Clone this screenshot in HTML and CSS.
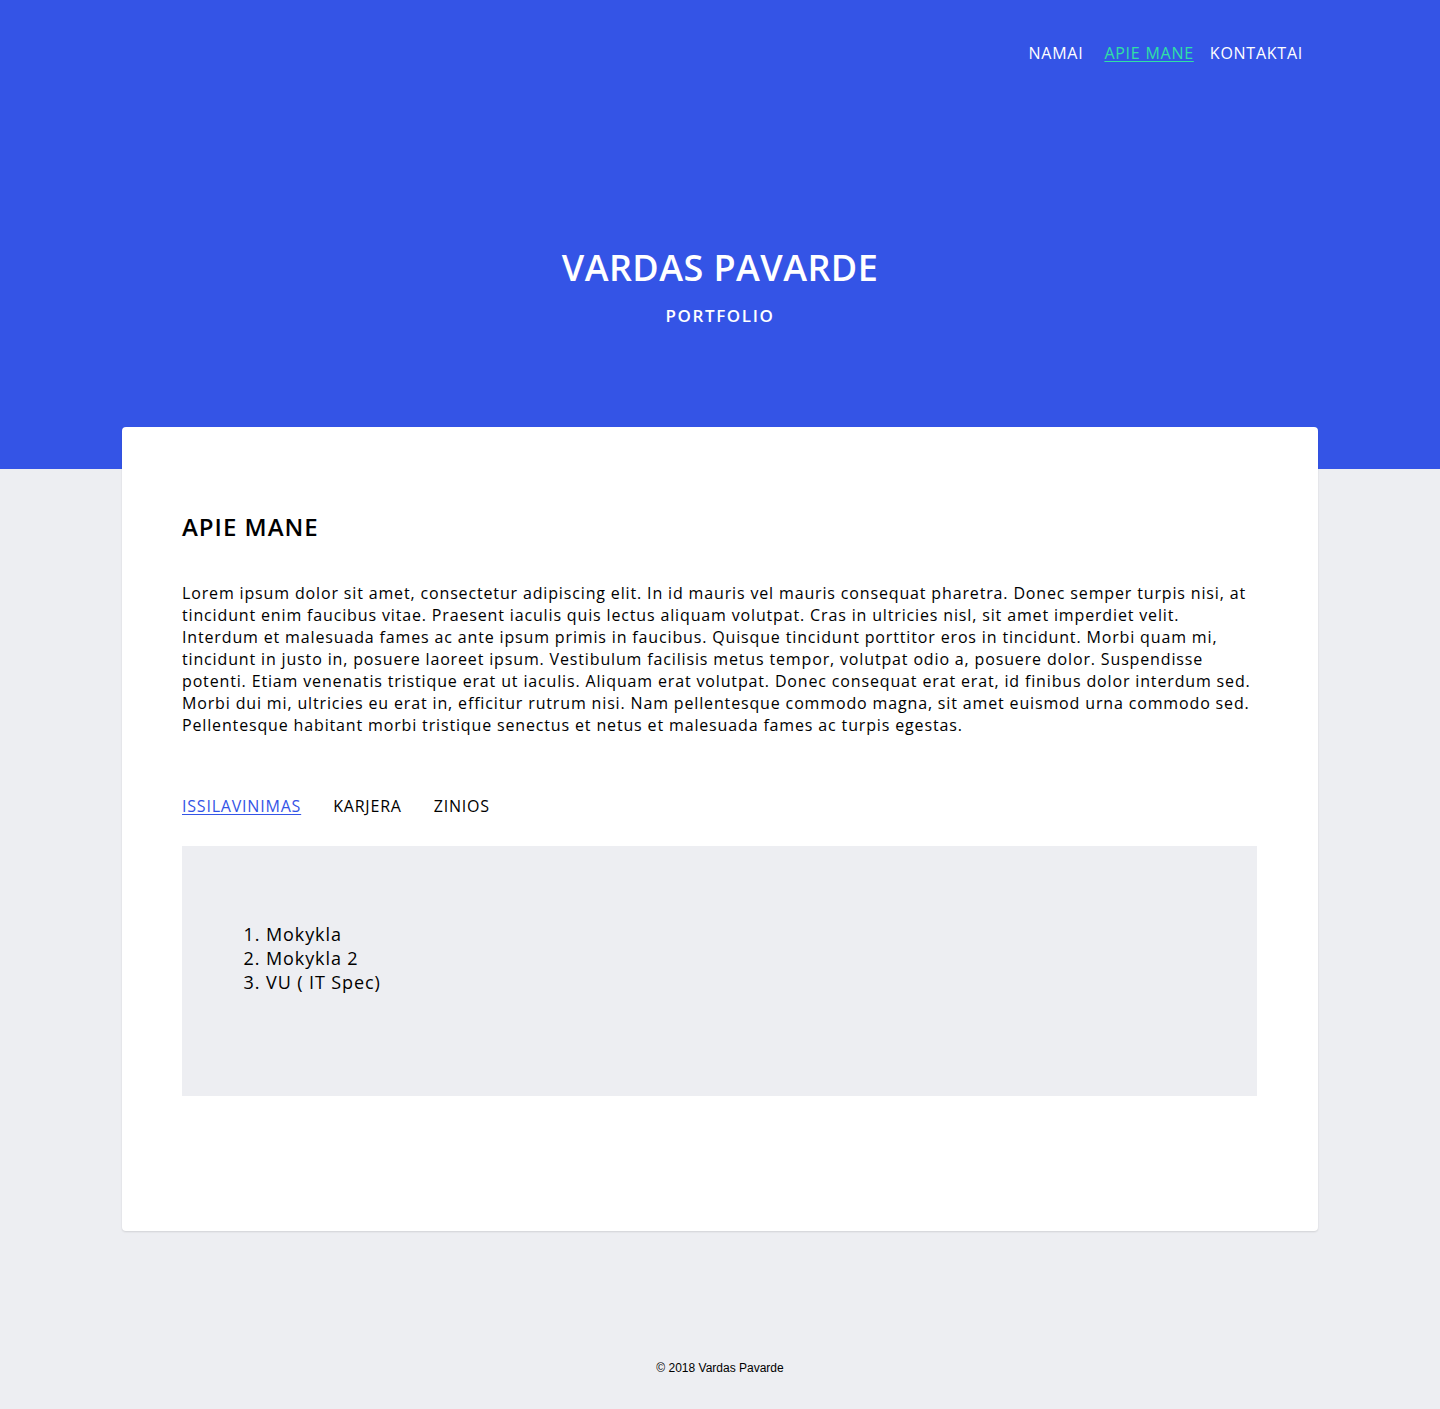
FILE: index.html
```html
<!DOCTYPE html>
<html lang="lt">
<head>
<meta charset="utf-8">
<title>Vardas Pavarde</title>
<link rel="stylesheet" href="styles.css">
</head>
<body>
<header class="hero">
  <nav class="nav">
    <a class="nav-link" href="#">NAMAI</a>
    <a class="nav-link active" href="#">APIE MANE</a>
    <a class="nav-link" href="#">KONTAKTAI</a>
  </nav>
  <div class="hero-text">
    <h1 class="hero-title">VARDAS PAVARDE</h1>
    <p class="hero-sub">PORTFOLIO</p>
  </div>
</header>
<main class="card">
  <h2 class="card-title">APIE MANE</h2>
  <p class="about">Lorem ipsum dolor sit amet, consectetur adipiscing elit. In id mauris vel mauris consequat pharetra. Donec semper turpis nisi, at tincidunt enim faucibus vitae. Praesent iaculis quis lectus aliquam volutpat. Cras in ultricies nisl, sit amet imperdiet velit. Interdum et malesuada fames ac ante ipsum primis in faucibus. Quisque tincidunt porttitor eros in tincidunt. Morbi quam mi, tincidunt in justo in, posuere laoreet ipsum. Vestibulum facilisis metus tempor, volutpat odio a, posuere dolor. Suspendisse potenti. Etiam venenatis tristique erat ut iaculis. Aliquam erat volutpat. Donec consequat erat erat, id finibus dolor interdum sed. Morbi dui mi, ultricies eu erat in, efficitur rutrum nisi. Nam pellentesque commodo magna, sit amet euismod urna commodo sed. Pellentesque habitant morbi tristique senectus et netus et malesuada fames ac turpis egestas.</p>
  <div class="tabs">
    <a class="tab active" href="#">ISSILAVINIMAS</a>
    <a class="tab" href="#">KARJERA</a>
    <a class="tab" href="#">ZINIOS</a>
  </div>
  <div class="panel">
    <ol class="list">
      <li>Mokykla</li>
      <li>Mokykla 2</li>
      <li>VU ( IT Spec)</li>
    </ol>
  </div>
</main>
<footer class="footer">© 2018 Vardas Pavarde</footer>
</body>
</html>
```
FILE: styles.css
```css
* { box-sizing: border-box; }
html, body { margin: 0; padding: 0; }
body {
  background: #edeef2;
  font-family: "Open Sans", "Noto Sans", sans-serif;
  color: #000;
  min-height: 1409px;
}
.hero {
  background: #3454e6;
  height: 469px;
  display: flex;
  flex-direction: column;
}
.nav {
  display: flex;
  justify-content: flex-end;
  padding: 42px 137px 0 0;
  height: 110px;
}
.nav-link {
  color: #fff;
  text-decoration: none;
  font-size: 16px;
  line-height: 22px;
  letter-spacing: 0.75px;
  margin-left: 16px;
}
.nav-link:first-child { margin-left: 0; margin-right: 5px; }
.nav-link.active {
  color: #2fe0a5;
  text-decoration: underline;
  text-underline-offset: 2px;
}
.hero-text {
  text-align: center;
  color: #fff;
  padding-top: 135px;
}
.hero-title {
  margin: 0;
  font-size: 36px;
  line-height: 46px;
  font-weight: 600;
  letter-spacing: 0.45px;
}
.hero-sub {
  margin: 13px 0 0;
  font-size: 17px;
  line-height: 24px;
  font-weight: 600;
  letter-spacing: 1.6px;
}
.card {
  width: 1196px;
  margin: -42px auto 0;
  background: #fff;
  border-radius: 4px;
  box-shadow: 0 1px 2px rgba(0,0,0,0.12);
  padding: 60px 61px 135px 60px;
}
.card-title {
  margin: 24px 0 0;
  font-size: 24px;
  line-height: 32px;
  font-weight: 600;
  letter-spacing: 1px;
}
.about {
  margin: 39px 0 0;
  font-size: 16px;
  line-height: 22px;
  letter-spacing: 0.85px;
}
.tabs {
  display: flex;
  gap: 32px;
  margin-top: 59px;
}
.tab {
  color: #000;
  text-decoration: none;
  font-size: 16px;
  line-height: 22px;
  letter-spacing: 0.8px;
}
.tab.active {
  color: #3454e6;
  text-decoration: underline;
  text-underline-offset: 2px;
}
.panel {
  margin-top: 29px;
  background: #edeef2;
  height: 250px;
  padding: 76px 0 0 60px;
}
.list {
  margin: 0;
  padding: 0 0 0 24px;
  font-size: 18px;
  line-height: 24px;
  letter-spacing: 0.9px;
}
.footer {
  text-align: center;
  font-family: "Liberation Sans", Arial, sans-serif;
  font-size: 12px;
  line-height: 14px;
  padding: 130px 0 34px;
  color: #000;
}
```
